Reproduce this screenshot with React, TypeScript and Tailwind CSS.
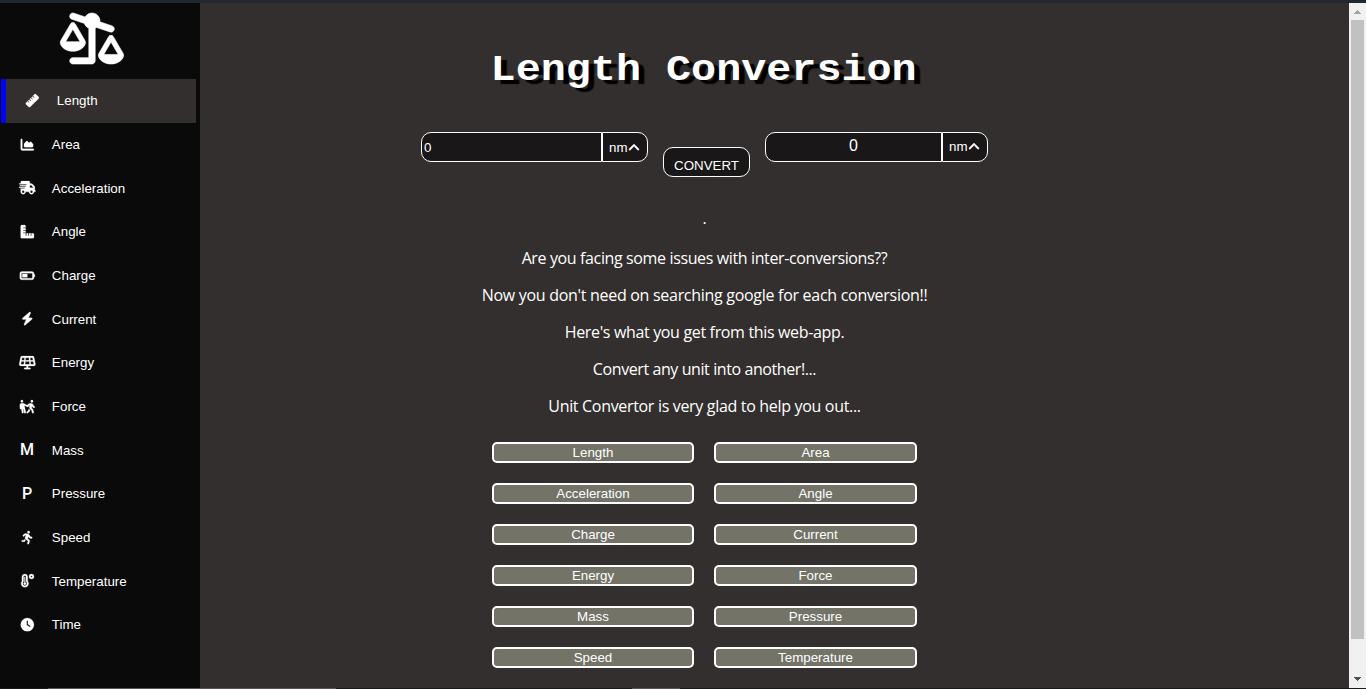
import type { ComponentType, ReactNode } from 'react';
import {
  FaRuler,
  FaChartArea,
  FaTruckFast,
  FaRulerCombined,
  FaBatteryHalf,
  FaBolt,
  FaSolarPanel,
  FaPeoplePulling,
  FaPersonRunning,
  FaClock,
  FaAngleUp,
  FaScaleUnbalancedFlip,
} from 'react-icons/fa6';

function Thermometer({ className }: { className?: string }) {
  return (
    <svg viewBox="0 0 512 512" fill="currentColor" className={className}>
      <path
        fillRule="evenodd"
        d="M160 0C98 0 48 50 48 112v166.500C26 303 16 334 16 368c0 79.500 64.500 144 144 144s144-64.500 144-144c0-34-12-65-32-89.500V112C272 50 222 0 160 0zm0 64c26.500 0 48 21.500 48 48v180l9 9c14 16 23 40 23 67 0 44-36 80-80 80s-80-36-80-80c0-27 9-51 23-67l9-9V112c0-26.500 21.500-48 48-48zM416 0a96 96 0 1 0 0 192 96 96 0 0 0 0-192zm0 64a32 32 0 1 1 0 64 32 32 0 0 1 0-64z"
      />
      <path d="M144 112h32v212a48 48 0 1 1-32 0z" />
    </svg>
  );
}

type Icon = ComponentType<{ className?: string }>;

const iconClass = 'h-[13.333px] w-[16.667px] overflow-visible stroke-current stroke-[8px]';

const nav: { label: string; icon?: Icon; letter?: string }[] = [
  { label: 'Length', icon: FaRuler },
  { label: 'Area', icon: FaChartArea },
  { label: 'Acceleration', icon: FaTruckFast },
  { label: 'Angle', icon: FaRulerCombined },
  { label: 'Charge', icon: FaBatteryHalf },
  { label: 'Current', icon: FaBolt },
  { label: 'Energy', icon: FaSolarPanel },
  { label: 'Force', icon: FaPeoplePulling },
  { label: 'Mass', letter: 'M' },
  { label: 'Pressure', letter: 'P' },
  { label: 'Speed', icon: FaPersonRunning },
  { label: 'Temperature', icon: Thermometer },
  { label: 'Time', icon: FaClock },
];

const lines: { text: string; tracking: string }[] = [
  { text: 'Are you facing some issues with inter-conversions??', tracking: 'tracking-[-0.37px]' },
  { text: "Now you don't need on searching google for each conversion!!", tracking: 'tracking-[-0.29px]' },
  { text: "Here's what you get from this web-app.", tracking: 'tracking-[-0.34px]' },
  { text: 'Convert any unit into another!...', tracking: 'tracking-[-0.41px]' },
  { text: 'Unit Convertor is very glad to help you out...', tracking: 'tracking-[-0.32px]' },
];

function Sidebar() {
  return (
    <aside className="w-[200px] shrink-0 bg-[#0a0a0a] pl-px pr-1">
      <div className="flex h-[76px] justify-center pr-[14px] pt-[10px]">
        <FaScaleUnbalancedFlip className="h-[51px] w-[64px] overflow-visible stroke-current stroke-[6px] [stroke-linejoin:round]" />
      </div>
      <nav>
        {nav.map(({ label, icon: Glyph, letter }, i) => (
          <button
            key={label}
            className={
              'flex h-[43.67px] w-full items-center pl-[17.700px] text-left ' +
              (i === 0 ? 'border-l-[5px] border-[#0000ff] bg-[#332f2e]' : '')
            }
          >
            <span className="flex w-[16.667px] shrink-0 justify-center">
              {Glyph ? (
                <Glyph className={iconClass} />
              ) : (
                <span className="font-['Roboto'] text-[16px] font-medium leading-4">{letter}</span>
              )}
            </span>
            <span className="ml-[16.500px] pt-[1.1px]">{label}</span>
          </button>
        ))}
      </nav>
    </aside>
  );
}

function Unit({ offset }: { offset: string }) {
  return (
    <button
      className={
        'flex h-[30px] w-[46px] items-center rounded-r-[10px] border border-white bg-[#191717] pl-[6px] ' + offset
      }
    >
      nm
      <FaAngleUp className="h-[13.333px] w-[12px] stroke-current stroke-[16px]" />
    </button>
  );
}

function Shortcut({ children }: { children: ReactNode }) {
  return (
    <button className="flex h-[21px] items-center justify-center rounded-[5px] border-2 border-white bg-[#737368]">
      {children}
    </button>
  );
}

function ScrollBar() {
  return (
    <div className="flex w-[17px] shrink-0 flex-col items-center bg-[#f1f1f1]">
      <svg viewBox="0 0 17 17" className="size-[17px] shrink-0" shapeRendering="crispEdges">
        <path d="M5 11h7L8.500 7z" fill="#a3a3a3" />
      </svg>
      <div className="h-[619px] w-[13px] bg-[#c1c1c1]" />
      <svg viewBox="0 0 17 17" className="mt-auto size-[17px] shrink-0" shapeRendering="crispEdges">
        <path d="M5 6h7L8.500 10z" fill="#505050" />
      </svg>
    </div>
  );
}

export default function App() {
  return (
    <div className="flex h-[689px] w-[1366px] flex-col overflow-hidden bg-[#332f2e] font-['Liberation_Sans',Arial,sans-serif] text-[13.333px] text-white">
      <div className="h-[3px] shrink-0 bg-[#22292e]" />
      <div className="flex h-[685px]">
        <Sidebar />
        <main className="flex min-w-0 flex-1 flex-col items-center pr-[140px]">
          <h1 className="mt-[42px] mr-[2px] h-[52px] whitespace-pre font-['Liberation_Mono',monospace] text-[36px] font-bold leading-[52px] [text-shadow:5px_4px_1px_#000] [transform:scaleX(1.16)]">
            Length Conversion
          </h1>
          <div className="mt-[35px] flex h-[48px] items-start">
            <input
              readOnly
              value="0"
              className="h-[30px] w-[181px] rounded-l-[10px] border border-white bg-[#191717] px-[2px] outline-none"
            />
            <Unit offset="pt-px" />
            <button className="ml-[15px] mt-[15px] h-[30px] w-[87px] rounded-[10px] border border-white bg-[#191717] pt-[7px] text-[13.333px] leading-5">
              CONVERT
            </button>
            <div className="ml-[15px] h-[30px] w-[177px] rounded-l-[10px] border border-white bg-[#191717] text-center text-[16px] leading-[25px]">
              0
            </div>
            <Unit offset="pb-px" />
          </div>
          <div className="mt-[28px] flex flex-col items-center font-['Open_Sans','Noto_Sans',sans-serif] text-[16px] leading-[21px]">
            <p className="mb-[19px]">.</p>
            {lines.map(({ text, tracking }) => (
              <p key={text} className={'mb-4 whitespace-nowrap ' + tracking}>
                {text}
              </p>
            ))}
          </div>
          <div className="mt-[9px] grid w-[425px] grid-cols-[202px_203px] gap-5">
            {nav.slice(0, 12).map(({ label }) => (
              <Shortcut key={label}>{label}</Shortcut>
            ))}
          </div>
        </main>
        <ScrollBar />
      </div>
      <div className="flex h-px shrink-0 bg-[#1c191c]">
        <div className="ml-12 h-px w-72 bg-[#5b5558]" />
        <div className="ml-[296px] h-px w-12 bg-[#5b5558]" />
      </div>
    </div>
  );
}
